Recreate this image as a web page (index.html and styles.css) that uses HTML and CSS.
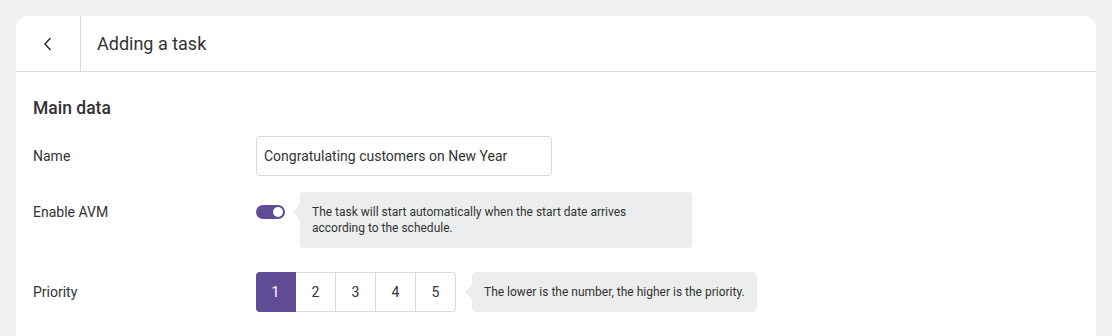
FILE: index.html
```html
<!DOCTYPE html>
<html lang="en">
<head>
<meta charset="utf-8">
<title>Adding a task</title>
<link rel="stylesheet" href="styles.css">
</head>
<body>
<div class="card">
  <header class="card-header">
    <button class="back" type="button" aria-label="Back">
      <svg width="16" height="16" viewBox="0 0 16 16"><path d="M10 2.5 L5 8 L10 13.5" fill="none" stroke="#333" stroke-width="1.6" stroke-linecap="round" stroke-linejoin="round"/></svg>
    </button>
    <h1 class="title">Adding a task</h1>
  </header>
  <section class="content">
    <h2 class="section-title">Main data</h2>
    <div class="row row-name">
      <div class="label">Name</div>
      <div class="field"><div class="input">Congratulating customers on New Year</div></div>
    </div>
    <div class="row row-avm">
      <div class="label">Enable AVM</div>
      <div class="field">
        <div class="toggle-wrap"><span class="toggle"><span class="knob"></span></span></div>
        <div class="hint hint-wide">The task will start automatically when the start date arrives according to the schedule.</div>
      </div>
    </div>
    <div class="row row-priority">
      <div class="label">Priority</div>
      <div class="field">
        <div class="segments">
          <span class="seg active">1</span><span class="seg">2</span><span class="seg">3</span><span class="seg">4</span><span class="seg">5</span>
        </div>
        <div class="hint">The lower is the number, the higher is the priority.</div>
      </div>
    </div>
  </section>
</div>
</body>
</html>
```

FILE: styles.css
```css
* { box-sizing: border-box; }
html, body { margin: 0; }
body {
  background: #f0f1f0;
  padding: 16px 16px 0;
  font-family: Roboto, "Liberation Sans", sans-serif;
  color: #333;
  font-size: 14px;
  height: 336px;
  overflow: hidden;
}
.card {
  background: #fff;
  border-radius: 12px 12px 0 0;
  height: 320px;
}
.card-header {
  display: flex;
  align-items: stretch;
  height: 56px;
  border-bottom: 1px solid #dadada;
}
.back {
  width: 65px;
  border: 0;
  border-right: 1px solid #dadada;
  background: transparent;
  display: flex;
  align-items: center;
  justify-content: center;
  padding: 0;
  margin: 0;
}
.back svg { margin-right: 1px; }
.title {
  margin: 0;
  padding-left: 16px;
  font-size: 18px;
  font-weight: 400;
  display: flex;
  align-items: center;
  color: #333;
}
.content {
  padding: 24px 17px 0;
}
.section-title {
  margin: 0;
  font-size: 17.5px;
  font-weight: 500;
  line-height: 24px;
}
.row {
  display: flex;
  align-items: flex-start;
}
.row-name { margin-top: 16px; }
.row-avm { margin-top: 16px; }
.row-priority { margin-top: 24px; }
.label {
  width: 223px;
  flex: none;
  line-height: 40px;
}
.field {
  display: flex;
  align-items: flex-start;
}
.input {
  width: 296px;
  height: 40px;
  border: 1px solid #d9d9d9;
  border-radius: 4px;
  padding: 0 8px 0 7px;
  line-height: 38px;
}
.toggle-wrap {
  height: 40px;
  display: flex;
  align-items: center;
}
.toggle {
  width: 29px;
  height: 14px;
  border-radius: 7px;
  background: #604b96;
  position: relative;
  display: block;
  margin-top: -1px;
}
.knob {
  position: absolute;
  right: 2px;
  top: 2px;
  width: 10px;
  height: 10px;
  border-radius: 50%;
  background: #fff;
}
.hint {
  position: relative;
  background: #eceeed;
  border-radius: 4px;
  font-size: 12px;
  line-height: 16px;
  padding: 12px;
  margin-left: 16px;
  color: #333;
}
.hint::before {
  content: "";
  position: absolute;
  left: -7px;
  top: 12px;
  border-top: 8px solid transparent;
  border-bottom: 8px solid transparent;
  border-right: 7px solid #eceeed;
}
.hint-wide {
  width: 392px;
  margin-left: 15px;
}
.segments {
  display: flex;
  height: 40px;
}
.seg {
  width: 40px;
  height: 40px;
  display: flex;
  align-items: center;
  justify-content: center;
  border: 1px solid #d9d9d9;
  border-left: 0;
  font-size: 14px;
}
.seg:first-child { border-radius: 4px 0 0 4px; }
.seg:last-child { border-radius: 0 4px 4px 0; }
.seg.active {
  background: #604b96;
  border-color: #604b96;
  color: #fff;
}
```
